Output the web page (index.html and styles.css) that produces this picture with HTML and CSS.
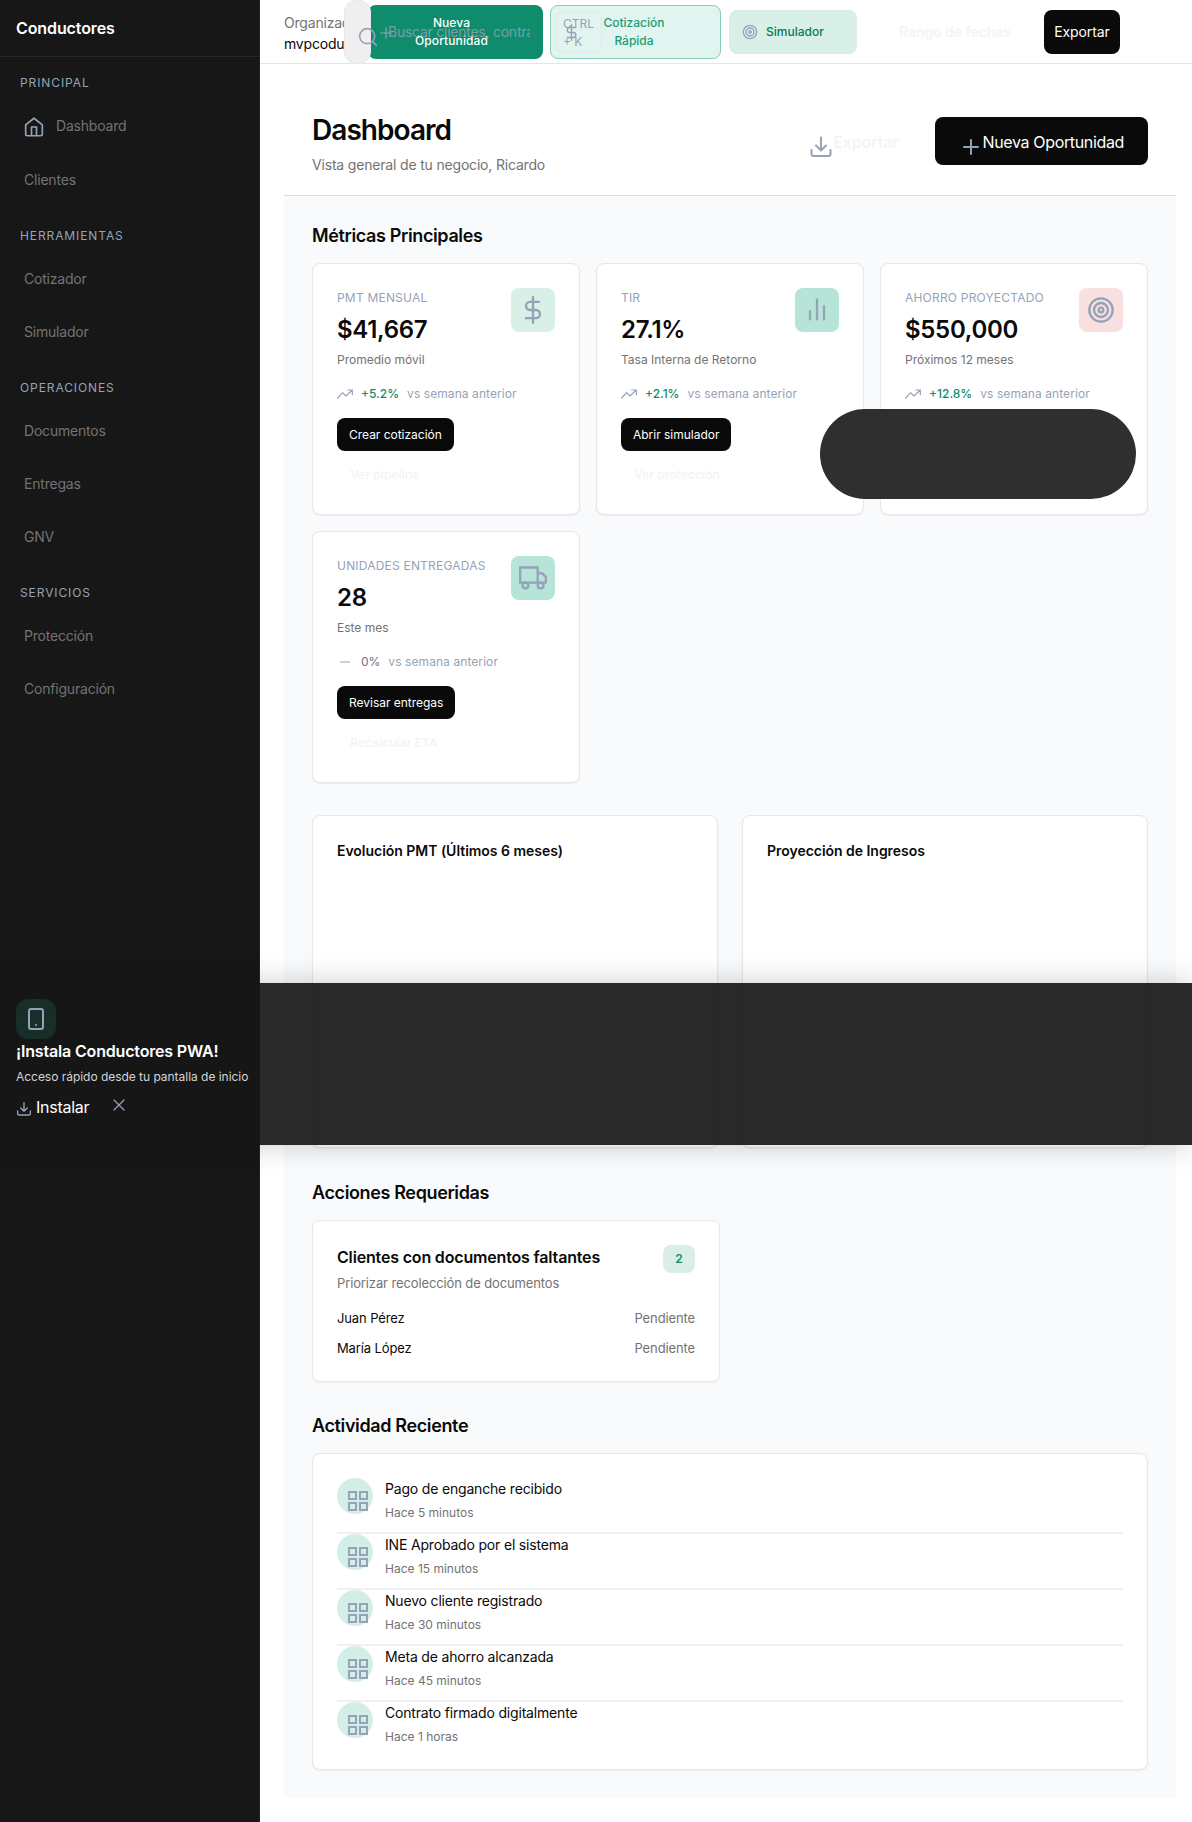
FILE: index.html
```html
<!DOCTYPE html>
<html lang="es">
<head>
<meta charset="utf-8">
<title>Conductores</title>
<link rel="stylesheet" href="styles.css">
</head>
<body>
<svg class="defs" width="0" height="0">
  <symbol id="trend" viewBox="0 0 24 24"><path d="M1 18l7.500-8 5 5L23 6M16 6h7v7"/></symbol>
  <symbol id="target" viewBox="0 0 24 24"><circle cx="12" cy="12" r="10"/><circle cx="12" cy="12" r="6"/><circle cx="12" cy="12" r="2"/></symbol>
  <symbol id="dollar" viewBox="0 0 24 24"><path d="M12 1v22M17 5H9.500a3.500 3.500 0 0 0 0 7h5a3.500 3.500 0 0 1 0 7H6"/></symbol>
  <symbol id="download" viewBox="0 0 24 24"><path d="M21.500 15v4a2 2 0 0 1-2 2H4.500a2 2 0 0 1-2-2v-4M7 10.500l5 5 5-5M12 15V2.500"/></symbol>
  <symbol id="plus" viewBox="0 0 24 24"><path d="M12 5v14M5 12h14"/></symbol>
  <symbol id="grid" viewBox="0 0 24 24"><path d="M3 3h7v7H3zM14 3h7v7h-7zM14 14h7v7h-7zM3 14h7v7H3z"/></symbol>
</svg>
<div class="app">
  <aside class="sidebar">
    <div class="brand">Conductores</div>
    <nav class="nav">
      <h3>PRINCIPAL</h3>
      <a class="with-icon"><svg class="icon home" viewBox="0 0 24 24"><path d="M2 9.500l10-8 10 8v11a2 2 0 0 1-2 2H4a2 2 0 0 1-2-2zM9 22V12h6v10"/></svg>Dashboard</a>
      <a>Clientes</a>
      <h3>HERRAMIENTAS</h3>
      <a>Cotizador</a>
      <a>Simulador</a>
      <h3>OPERACIONES</h3>
      <a>Documentos</a>
      <a>Entregas</a>
      <a>GNV</a>
      <h3>SERVICIOS</h3>
      <a>Protección</a>
      <a>Configuración</a>
    </nav>
  </aside>
  <div class="content">
    <header class="topbar">
      <div class="org"><span>Organización</span><b>mvpcoducto</b></div>
      <div class="top-actions">
        <button class="btn-new">Nueva<br>Oportunidad</button>
        <button class="btn-quote">Cotización<br>Rápida</button>
        <button class="btn-sim"><svg class="icon"><use href="#target"/></svg>Simulador</button>
        <span class="range">Rango de fechas</span>
        <button class="btn-exp">Exportar</button>
      </div>
      <div class="search-cap"></div>
      <svg class="icon search-icon" viewBox="0 0 24 24"><circle cx="11" cy="11" r="9"/><path d="M22 22l-4.500-4.500"/></svg>
      <svg class="icon new-plus"><use href="#plus"/></svg>
      <div class="search-text">Buscar clientes, contratos</div>
      <kbd class="kbd">CTRL<br>+ K</kbd>
      <svg class="icon quote-dollar"><use href="#dollar"/></svg>
    </header>
    <main class="main">
      <section class="page-head">
        <div><h1>Dashboard</h1><p>Vista general de tu negocio, Ricardo</p></div>
        <div class="head-actions">
          <span class="ghost"><svg class="icon"><use href="#download"/></svg>Exportar</span>
          <button class="primary"><svg class="icon"><use href="#plus"/></svg>Nueva Oportunidad</button>
        </div>
      </section>
      <div class="panel">
        <h2>Métricas Principales</h2>
        <div class="metrics">
          <article class="card metric">
            <div class="mtop"><div><h4>PMT MENSUAL</h4><strong>$41,667</strong><small>Promedio móvil</small></div><i class="box mint"><svg class="icon"><use href="#dollar"/></svg></i></div>
            <div class="trend"><svg class="icon"><use href="#trend"/></svg><em>+5.2%</em><span>vs semana anterior</span></div>
            <button>Crear cotización</button><span class="faint">Ver pipeline</span>
          </article>
          <article class="card metric">
            <div class="mtop"><div><h4>TIR</h4><strong>27.1%</strong><small>Tasa Interna de Retorno</small></div><i class="box green"><svg class="icon" viewBox="0 0 24 24"><path d="M12 20V3M18 20V9M6 20v-7"/></svg></i></div>
            <div class="trend"><svg class="icon"><use href="#trend"/></svg><em>+2.1%</em><span>vs semana anterior</span></div>
            <button>Abrir simulador</button><span class="faint">Ver protección</span>
          </article>
          <article class="card metric">
            <div class="mtop"><div><h4>AHORRO PROYECTADO</h4><strong>$550,000</strong><small>Próximos 12 meses</small></div><i class="box rose"><svg class="icon"><use href="#target"/></svg></i></div>
            <div class="trend"><svg class="icon"><use href="#trend"/></svg><em>+12.8%</em><span>vs semana anterior</span></div>
          </article>
          <article class="card metric">
            <div class="mtop"><div><h4>UNIDADES ENTREGADAS</h4><strong>28</strong><small>Este mes</small></div><i class="box green"><svg class="icon truck" viewBox="0 0 24 24"><path d="M1 3h15v13H1zM16 8h4l3 3v5h-7z"/><circle cx="5.500" cy="18.500" r="2.500"/><circle cx="18.500" cy="18.500" r="2.500"/></svg></i></div>
            <div class="trend"><svg class="icon" viewBox="0 0 24 24"><path d="M5 12h14"/></svg><em class="flat">0%</em><span>vs semana anterior</span></div>
            <button>Revisar entregas</button><span class="faint">Recalcular ETA</span>
          </article>
        </div>
        <div class="charts">
          <article class="card"><h3>Evolución PMT (Últimos 6 meses)</h3></article>
          <article class="card"><h3>Proyección de Ingresos</h3></article>
        </div>
        <h2>Acciones Requeridas</h2>
        <article class="card tasks">
          <div class="tasks-head"><div><h3>Clientes con documentos faltantes</h3><p>Priorizar recolección de documentos</p></div><span class="count">2</span></div>
          <div class="row"><span>Juan Pérez</span><span>Pendiente</span></div>
          <div class="row"><span>María López</span><span>Pendiente</span></div>
        </article>
        <h2>Actividad Reciente</h2>
        <article class="card activity">
          <div class="item"><i><svg class="icon"><use href="#grid"/></svg></i><div><b>Pago de enganche recibido</b><small>Hace 5 minutos</small></div></div>
          <div class="item"><i><svg class="icon"><use href="#grid"/></svg></i><div><b>INE Aprobado por el sistema</b><small>Hace 15 minutos</small></div></div>
          <div class="item"><i><svg class="icon"><use href="#grid"/></svg></i><div><b>Nuevo cliente registrado</b><small>Hace 30 minutos</small></div></div>
          <div class="item"><i><svg class="icon"><use href="#grid"/></svg></i><div><b>Meta de ahorro alcanzada</b><small>Hace 45 minutos</small></div></div>
          <div class="item"><i><svg class="icon"><use href="#grid"/></svg></i><div><b>Contrato firmado digitalmente</b><small>Hace 1 horas</small></div></div>
        </article>
      </div>
    </main>
  </div>
</div>
<div class="toast"></div>
<div class="install">
  <div class="phone"><svg class="icon" viewBox="0 0 24 24"><rect x="5" y="2" width="14" height="20" rx="2"/><path d="M12 18h.01"/></svg></div>
  <h3>¡Instala Conductores PWA!</h3>
  <p>Acceso rápido desde tu pantalla de inicio</p>
  <div class="install-actions"><svg class="icon"><use href="#download"/></svg><span>Instalar</span><svg class="icon close" viewBox="0 0 24 24"><path d="M18 6L6 18M6 6l12 12"/></svg></div>
</div>
</body>
</html>
```
FILE: styles.css
```css
* { box-sizing: border-box; }
body { margin: 0; position: relative; font: 14px/20px Inter, sans-serif; color: #0a0a0a; background: #fff; }
h1, h2, h3, h4, p { margin: 0; font-weight: 600; }
button { border: 0; font: inherit; letter-spacing: inherit; margin: 0; padding: 0; }
i, em { font-style: normal; }
.defs { position: absolute; }
.icon { fill: none; stroke: #94a3b8; stroke-width: 2; stroke-linecap: round; stroke-linejoin: round; width: 20px; height: 20px; flex: none; }
.app { display: flex; height: 1822px; }

.sidebar { width: 260px; flex: none; background: #171717; border-right: 1px solid #262626; }
.brand { height: 57px; padding: 0 16px; border-bottom: 1px solid #262626; color: #fff; font-size: 16px; font-weight: 600; line-height: 56px; letter-spacing: -.1px; }
.nav { display: flex; flex-direction: column; padding: 15px 20px; letter-spacing: -.2px; }
.nav h3 { height: 21px; font-size: 12px; font-weight: 400; line-height: 21px; letter-spacing: .9px; color: #94a3b8; }
.nav a { height: 53px; padding-left: 4px; line-height: 53px; color: #737373; }
.nav h3 + a { margin-top: 6px; }
.nav a + h3 { margin-top: 19px; }
.nav .with-icon { display: flex; gap: 12px; align-items: center; height: 54px; padding-bottom: 2px; }
.home { margin-top: 3px; }

.content { flex: 1; min-width: 0; }
.topbar { position: relative; height: 64px; border-bottom: 1px solid #e5e5e5; display: flex; }
.org { display: flex; flex-direction: column; width: 86px; padding: 12px 0 0 24px; line-height: 21px; letter-spacing: -.2px; overflow: hidden; color: #737373; }
.org b { color: #0a0a0a; font-weight: 400; }
.top-actions { display: flex; align-items: center; margin-left: 22px; font-size: 12px; font-weight: 500; line-height: 18px; }
.btn-new { width: 175px; height: 54px; border-radius: 8px; background: #0e8c6c; color: #fff; padding-right: 8px; letter-spacing: .1px; }
.btn-quote { width: 171px; height: 54px; margin-left: 7px; border-radius: 8px; border: 1px solid #81cfb8; background: #e1f4ef; color: #1a9c79; padding-right: 3px; }
.btn-sim { display: flex; align-items: center; gap: 8px; width: 128px; height: 44px; margin-left: 8px; padding-left: 12px; border-radius: 8px; border: 1px solid #e2e8f0; background: #d8f0e8; color: #087a59; }
.btn-sim .icon { width: 16px; height: 16px; margin-top: 1px; }
.range { width: 187px; padding-left: 42px; font-size: 14px; font-weight: 600; letter-spacing: -.08px; color: #f1f5f9; }
.btn-exp { width: 76px; height: 44px; border-radius: 8px; background: #0a0a0a; color: #fff; font-size: 14px; font-weight: 400; letter-spacing: -.1px; }
.search-cap { position: absolute; left: 84px; top: 0; width: 27px; height: 64px; border: 1px solid #e8e8ea; border-radius: 12px; background: #efefef; }
.search-icon { position: absolute; left: 98px; top: 27px; }
.new-plus { position: absolute; left: 117px; top: 24px; width: 18px; height: 18px; stroke-width: 1.5; }
.search-text { position: absolute; left: 128px; top: 22px; width: 142px; overflow: hidden; white-space: nowrap; letter-spacing: -.25px; color: #94a3b8; opacity: .8; }
.kbd { position: absolute; left: 296px; top: 11px; width: 46px; height: 42px; padding: 3px 6px; border: 1px solid #e5e7eb; border-radius: 8px; font: 12px/18px Inter, sans-serif; color: #94a3b8; }
.quote-dollar { position: absolute; left: 303px; top: 24px; width: 17px; height: 17px; }

.main { padding: 0 16px 0 24px; }
.page-head { display: flex; justify-content: space-between; height: 132px; padding: 49px 28px 0; border-bottom: 1px solid #dcdee0; }
.page-head h1 { font-size: 28px; line-height: 34px; letter-spacing: -.95px; }
.page-head p { margin-top: 8px; font-weight: 400; letter-spacing: -.18px; color: #737373; }
.head-actions { display: flex; gap: 36px; font-size: 16px; margin-top: 4px; height: 48.400px; align-items: flex-end; }
.ghost { display: flex; align-items: center; height: 48px; font-weight: 600; letter-spacing: -.15px; color: #f1f5f9; }
.ghost .icon, .primary .icon { width: 24px; height: 24px; margin-top: 10px; }
.ghost, .primary { padding-top: 1px; }
.primary { display: flex; align-items: center; width: 213.500px; height: 48px; padding-left: 24px; border-radius: 8px; background: #0a0a0a; color: #fff; letter-spacing: -.35px; }

.panel { height: 1602px; padding: 28px 28px 0; background: #f9fafc; }
.panel h2 { font-size: 18px; line-height: 24px; letter-spacing: -.37px; }
.card { background: #fff; border: 1px solid #e5e7eb; border-radius: 8px; padding: 24px; box-shadow: 0 1px 2px rgba(0,0,0,.06); }
.metrics { display: grid; grid-template-columns: repeat(3, 1fr); gap: 16px; margin-top: 15.400px; }
.metric { height: 252px; display: flex; flex-direction: column; align-items: flex-start; font-size: 12px; }
.mtop { display: flex; justify-content: space-between; align-self: stretch; height: 92px; }
.mtop h4 { font-weight: 400; line-height: 20px; color: #94a3b8; letter-spacing: .2px; }
.mtop strong { display: block; margin-top: 5px; font-size: 24px; font-weight: 600; line-height: 34px; letter-spacing: -.3px; }
.mtop small { display: block; margin-top: 3px; font-size: 12px; color: #737373; }
.box { display: flex; align-items: center; justify-content: center; width: 44px; height: 44px; border-radius: 8px; }
.box .icon { width: 28px; height: 28px; }
.box .truck { stroke-linejoin: miter; }
.mint { background: #d9f0e8; }
.green { background: #b7e4d8; }
.rose { background: #f8e0e0; }
.trend { display: flex; align-items: center; gap: 8px; height: 20px; margin-top: 4px; letter-spacing: .08px; color: #94a3b8; }
.trend .icon { width: 16px; height: 16px; stroke-width: 1.7; }
.trend em { color: #0e8c6c; font-weight: 500; letter-spacing: 0; }
.trend .flat { color: #737373; font-weight: 400; }
.metric button { height: 32.500px; margin-top: 14px; padding: 0 12px; border-radius: 8px; background: #0a0a0a; color: #fff; letter-spacing: -.02px; }
.faint { margin: 14px 0 0 13px; font-weight: 600; letter-spacing: .05px; color: #f1f5f9; }
.charts { display: grid; grid-template-columns: 1fr 1fr; gap: 24px; margin: 32px 0 32.600px; }
.charts .card { height: 333px; }
.charts h3 { font-size: 14px; line-height: 22px; letter-spacing: -.03px; }
.tasks { width: 408px; height: 162.400px; margin: 15px 0 32px; font-size: 13px; letter-spacing: -.12px; }
.tasks-head { display: flex; justify-content: space-between; height: 58px; }
.tasks h3 { font-size: 16px; line-height: 24px; letter-spacing: -.17px; }
.tasks p { margin-top: 4px; font-weight: 400; line-height: 20px; color: #737373; }
.count { width: 32px; height: 28px; border-radius: 8px; background: #d8eee6; color: #0e8c6c; font-size: 12px; font-weight: 600; line-height: 28px; text-align: center; }
.row { display: flex; justify-content: space-between; height: 30px; line-height: 30px; }
.row span + span { color: #737373; }
.activity { height: 317px; margin-top: 15px; }
.item { display: flex; gap: 12px; height: 56px; border-bottom: 2px solid #f0f0f0; }
.item:last-child { border: 0; }
.item i { width: 36px; height: 36px; border-radius: 50%; background: #d3eee6; padding: 11px 0 0 9px; }
.item .icon { width: 24px; height: 24px; stroke-linejoin: miter; }
.item b { display: block; font-weight: 400; line-height: 22px; letter-spacing: -.18px; }
.item small { display: block; margin-top: 3px; font-size: 12px; color: #737373; }

.toast { position: absolute; left: 819.500px; top: 409px; width: 316.500px; height: 90px; border-radius: 45px; background: #2f2f2f; }
.install { position: absolute; left: 0; top: 983px; width: 1192px; height: 162px; padding: 16px; background: rgba(23,23,23,.92); box-shadow: 0 0 28px rgba(0,0,0,.2); color: #fff; }
.phone { display: flex; align-items: center; justify-content: center; width: 40px; height: 40px; border-radius: 12px; background: #172f28; }
.phone .icon { width: 24px; height: 24px; }
.install h3 { font-size: 16px; line-height: 24px; letter-spacing: -.17px; }
.install p { margin-top: 4px; font-size: 12px; font-weight: 400; letter-spacing: -.03px; color: #d4d4d4; white-space: nowrap; }
.install-actions { display: flex; margin-top: 8px; font-size: 16px; line-height: 24px; letter-spacing: -.25px; }
.install-actions .icon { width: 16px; height: 16px; margin-top: 6px; }
.install-actions span { margin-left: 4px; }
.install-actions .close { width: 20px; height: 20px; margin: 0 0 0 20px; stroke-width: 1.5; }
```
